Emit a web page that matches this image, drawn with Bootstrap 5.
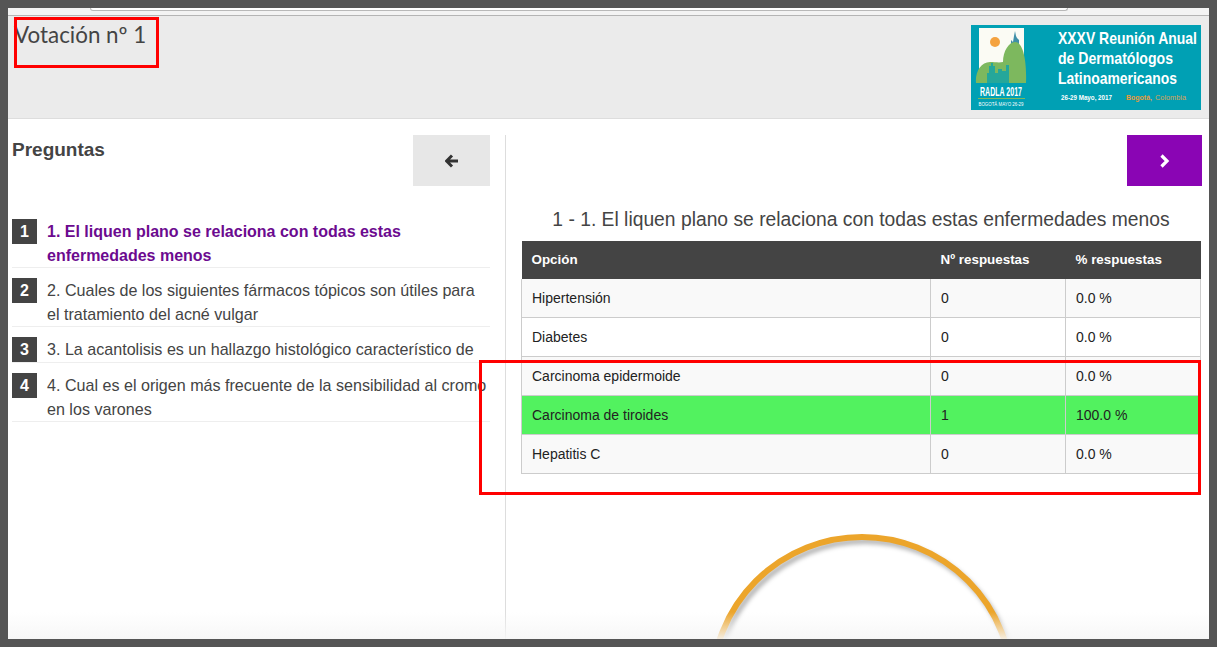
<!DOCTYPE html>
<html lang="es">
<head>
  <meta charset="UTF-8">
  <meta name="viewport" content="width=device-width, initial-scale=1.0">
  <title>Votación nº 1</title>
  <link href="https://cdn.jsdelivr.net/npm/bootstrap@5.3.0/dist/css/bootstrap.min.css" rel="stylesheet">
  <style>
    html, body { height: 100%; }
    body {
      background-color: #555;
      padding: 8px;
      overflow: hidden;
      font-family: "Liberation Sans", Arial, sans-serif;
      color: #444;
    }
    .marco { height: 631px; background-color: #fff; overflow: hidden; }
    .barra-nav { height: 8px; background-color: #f3f3f3; border-bottom: 1px solid #b4b4b4; }
    .barra-url { margin-left: 82px; width: 978px; height: 3px; background-color: #fff; border: 1px solid #b8b8b8; border-top: 0; border-radius: 0 0 4px 4px; }
    .cabecera { height: 103px; background-color: #ebebeb; border-bottom: 1px solid #ddd; padding: 7px 8px 0 6px; }
    .titulo { font-family: Lato, sans-serif; font-size: 22.4px; line-height: 24px; margin: 0; color: #444; font-weight: 400; }
    .logo-radla { margin-top: 2px; }
    .col-izq { width: 498px; height: 504px; padding: 0 15px 0 4px; border-right: 1px solid #ddd; margin-top: 16px; }
    .col-der { width: 703px; padding: 16px 8px 0 15px; }
    .preguntas { font-size: 19px; font-weight: 700; line-height: 20px; margin: 5px 0 0; color: #444; }
    .btn-cuadro { display: flex; align-items: center; justify-content: center; width: 77px; height: 51px; border: 0; border-radius: 0; padding: 0; }
    .btn-atras { background-color: #e7e7e7; }
    .btn-sig { background-color: #8a05b4; width: 75px; margin-right: -1px; }
    .lista-preg { list-style: none; margin: 23px 0 0; padding: 0; font-size: 16.1px; line-height: 23.5px; }
    .lista-preg li { display: flex; padding-top: 10px; border-bottom: 1px solid #eee; }
    .num-preg { flex: 0 0 25px; height: 25px; margin-right: 10px; background-color: #444; color: #fff; font-weight: 700; font-size: 16px; text-align: center; line-height: 25px; }
    .texto-preg { margin-top: 1px; }
    .activa { color: #6c0a8f; font-weight: 700; font-size: 16px; }
    .enunciado { font-size: 19.3px; line-height: 24px; text-align: center; margin: 22px 0 9px; color: #444; font-weight: 400; }
    .tabla-res { width: 679px; table-layout: fixed; border-collapse: collapse; font-size: 14px; color: #222; margin: 0; }
    .tabla-res th { background-color: #444; color: #fff; font-weight: 700; font-size: 13.4px; height: 38px; padding: 0 10px; border: 0; }
    .tabla-res td { height: 39px; padding: 1px 10px 0; border: 1px solid #ccc; border-top: 0; border-left: 0; background-color: #fff; }
    .tabla-res tbody tr:first-child td { height: 38px; }
    .tabla-res td:first-child { border-left: 1px solid #ccc; }
    .tabla-res tr.par td { background-color: #f9f9f9; }
    .tabla-res tr.correcta td { background-color: #52f25f; }
    .zona-grafico { margin-top: 60px; padding-left: 186px; }
    .aro { filter: drop-shadow(3px 4px 2px rgba(0,0,0,.28)); overflow: visible; }
    .fundido { position: absolute; left: 8px; right: 8px; top: 612px; height: 27px; background: linear-gradient(rgba(246,246,246,0), rgba(246,246,246,.9)); pointer-events: none; }
    .marca-roja { position: absolute; border: 3px solid #f00; pointer-events: none; }
    .marca-a { left: 14px; top: 17px; width: 145px; height: 51px; }
    .marca-b { left: 479px; top: 360px; width: 722px; height: 135px; }
    .pie-marco { position: absolute; left: 0; right: 0; top: 639px; height: 8px; background-color: #555; }
  </style>
</head>
<body>
  <div class="marco">
    <div class="barra-nav"><div class="barra-url"></div></div>

    <div class="cabecera d-flex justify-content-between align-items-start">
      <h1 class="titulo">Votación nº 1</h1>
      <svg class="logo-radla" width="230" height="85" viewBox="0 0 230 85" role="img" aria-label="RADLA 2017">
        <rect width="230" height="85" fill="#00a0b4"/>
        <rect x="8" y="3" width="45" height="48" fill="#fbfbf4"/>
        <circle cx="24" cy="17" r="5" fill="#f4a23f"/>
        <path d="M42 17 L43 11 L44 6 L45 11 L46 13 L48 15 L48 20 L40 20 L40 15 Z" fill="#3f8fa8"/>
        <path d="M5 58 C4 47 10 37 19 37 C24 37 28 38 32 37 C32 26 38 17 44 17 C51 17 56 32 55 58 Z" fill="#7db85e"/>
        <path d="M16 58 V48 H18 V41 H20 V38 H22 V41 H24 V48 H27 V44 H31 V46 H35 V40 H38 V58 Z" fill="#00a0b4" opacity=".7"/>
        <g font-family="Liberation Sans Narrow, Liberation Sans, sans-serif" fill="#fff">
          <text x="30" y="71" text-anchor="middle" font-size="12" font-weight="700" textLength="42" lengthAdjust="spacingAndGlyphs">RADLA 2017</text>
          <text x="30" y="81" text-anchor="middle" font-size="5" textLength="45" lengthAdjust="spacingAndGlyphs">BOGOTÁ MAYO 26-29</text>
          <g font-size="17" font-weight="700">
            <text x="87" y="19" textLength="139" lengthAdjust="spacingAndGlyphs">XXXV Reunión Anual</text>
            <text x="87" y="39" textLength="115" lengthAdjust="spacingAndGlyphs">de Dermatólogos</text>
            <text x="87" y="59" textLength="119" lengthAdjust="spacingAndGlyphs">Latinoamericanos</text>
          </g>
          <text x="90" y="75" font-size="8" font-weight="700" textLength="51" lengthAdjust="spacingAndGlyphs">26-29 Mayo, 2017</text>
          <text x="155" y="75" font-size="8" font-weight="700" fill="#e89a3c" textLength="26" lengthAdjust="spacingAndGlyphs">Bogotá,</text>
          <text x="184" y="75" font-size="8" fill="#d9a25a" textLength="31" lengthAdjust="spacingAndGlyphs">Colombia</text>
        </g>
        <rect x="7" y="73" width="47" height="1" fill="#7db85e"/>
      </svg>
    </div>

    <div class="d-flex">
      <div class="col-izq">
        <div class="d-flex justify-content-between align-items-start">
          <h2 class="preguntas">Preguntas</h2>
          <button class="btn-cuadro btn-atras" type="button" aria-label="Anterior">
            <svg width="14" height="14" viewBox="0 0 14 14"><path d="M7 1.5 1.5 7 7 12.5M2 7H13" fill="none" stroke="#333" stroke-width="3"/></svg>
          </button>
        </div>
        <ul class="lista-preg">
          <li><span class="num-preg">1</span><span class="texto-preg activa">1. El liquen plano se relaciona con todas estas enfermedades menos</span></li>
          <li><span class="num-preg">2</span><span class="texto-preg">2. Cuales de los siguientes fármacos tópicos son útiles para el tratamiento del acné vulgar</span></li>
          <li><span class="num-preg">3</span><span class="texto-preg">3. La acantolisis es un hallazgo histológico característico de</span></li>
          <li><span class="num-preg">4</span><span class="texto-preg">4. Cual es el origen más frecuente de la sensibilidad al cromo en los varones</span></li>
        </ul>
      </div>

      <div class="col-der">
        <div class="d-flex justify-content-end">
          <button class="btn-cuadro btn-sig" type="button" aria-label="Siguiente">
            <svg width="12" height="14" viewBox="0 0 12 14"><path d="M2.5 1.5 8 7 2.5 12.5" fill="none" stroke="#fff" stroke-width="3.2"/></svg>
          </button>
        </div>
        <h3 class="enunciado">1 - 1. El liquen plano se relaciona con todas estas enfermedades menos</h3>
        <table class="tabla-res">
          <colgroup><col style="width:409px"><col style="width:135px"><col style="width:135px"></colgroup>
          <thead>
            <tr><th>Opción</th><th>Nº respuestas</th><th>% respuestas</th></tr>
          </thead>
          <tbody>
            <tr class="par"><td>Hipertensión</td><td>0</td><td>0.0 %</td></tr>
            <tr><td>Diabetes</td><td>0</td><td>0.0 %</td></tr>
            <tr class="par"><td>Carcinoma epidermoide</td><td>0</td><td>0.0 %</td></tr>
            <tr class="correcta"><td>Carcinoma de tiroides</td><td>1</td><td>100.0 %</td></tr>
            <tr class="par"><td>Hepatitis C</td><td>0</td><td>0.0 %</td></tr>
          </tbody>
        </table>
        <div class="zona-grafico">
          <svg class="aro" width="320" height="110" viewBox="0 0 320 110">
            <circle cx="155" cy="153" r="150" fill="none" stroke="#eca52b" stroke-width="6"/>
          </svg>
        </div>
      </div>
    </div>
  </div>
  <div class="fundido"></div>
  <div class="pie-marco"></div>
  <div class="marca-roja marca-a"></div>
  <div class="marca-roja marca-b"></div>
</body>
</html>
